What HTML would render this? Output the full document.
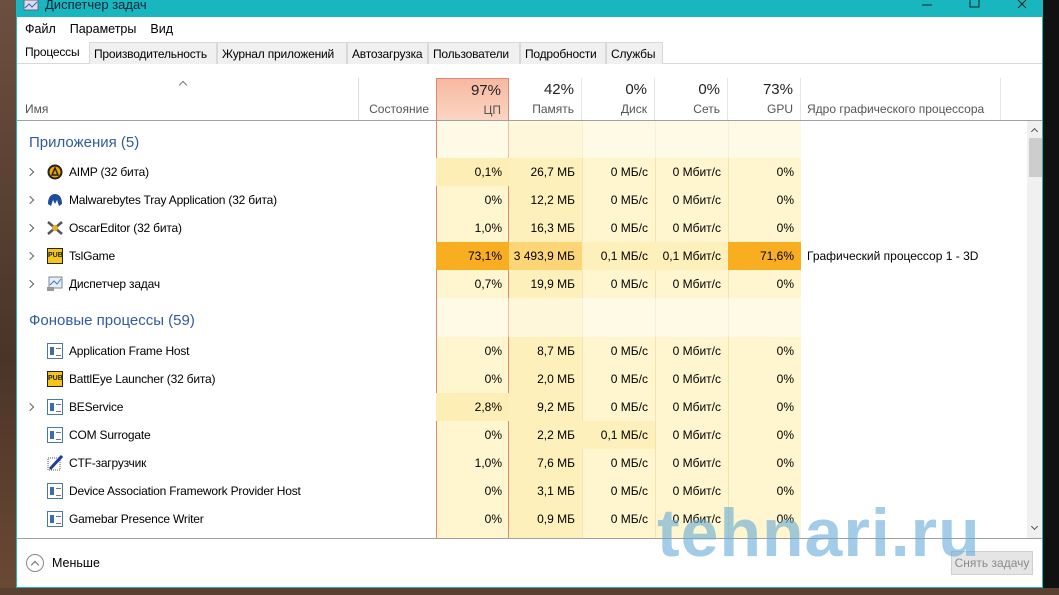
<!DOCTYPE html>
<html><head><meta charset="utf-8"><style>
*{margin:0;padding:0;box-sizing:border-box}
body{width:1059px;height:595px;overflow:hidden;background:#3a2a22;font-family:"Liberation Sans",sans-serif;font-size:12px;color:#000;position:relative}
.bg1{position:absolute;left:0;top:0;width:16px;height:595px;background:linear-gradient(#6b5040,#4a3428 60%,#6a4a35)}
.bg2{position:absolute;left:1043px;top:0;width:16px;height:595px;background:#111}
.bg3{position:absolute;left:0;top:588px;width:1059px;height:7px;background:#5a4030}
.win{position:absolute;left:16px;top:0;width:1027px;height:588px;background:#fff;border:1px solid #1ab8c0;border-top:none;overflow:hidden}
.title{position:absolute;left:0;top:0;width:100%;height:17px;background:#1ab6bf;color:#123;font-size:13px}
.title span{position:absolute;left:28px;top:-3px}
.menu{position:absolute;top:22px;left:8px;font-size:12.5px}
.menu span{margin-right:14px}
.tabs{position:absolute;top:42px;left:0;height:22px;border-bottom:1px solid #d9d9d9;width:100%}
.tab{position:absolute;top:0;height:22px;background:#f0f0f0;border:1px solid #d9d9d9;border-bottom:none;padding:4px 4px 0;font-size:12px;white-space:nowrap;letter-spacing:-0.2px}
.tab.a{background:#fff;border:none;top:-1px}
.hd{position:absolute;top:78px;height:42px;font-size:12px;color:#555}
.hd .p{position:absolute;right:7px;top:3px;font-size:15px;color:#222}
.hd .l{position:absolute;right:7px;top:24px}
.hline{position:absolute;left:0;top:120px;width:1027px;height:1px;background:#a0a0a0}
.row{position:absolute;left:0;height:28px;width:1010px}
.c{position:absolute;top:0;height:100%;text-align:right;padding-right:7px;line-height:28px;white-space:nowrap}
.n{position:absolute;left:52px;line-height:28px;white-space:nowrap;font-size:12px;letter-spacing:-0.2px}
.ar{position:absolute;left:10px;top:11px;width:6px;height:6px;border-right:1.3px solid #666;border-top:1.3px solid #666;transform:rotate(45deg)}
.ic{position:absolute;left:30px;top:6px;width:16px;height:16px}
.g{position:absolute;left:12px;font-size:15px;color:#2f5d9e;line-height:37px}
.svc{background:#fff;border:1px solid #4a78a8}
.svc:after{content:"";position:absolute;left:2px;top:3px;width:4px;height:8px;background:#3a6ea5}
.svc:before{content:"";position:absolute;left:8px;top:4px;width:5px;height:6px;border-top:1px solid #777;border-bottom:1px solid #777}
.pubg{background:#f5c518;border:1px solid #222;font-size:7px;font-weight:bold;line-height:14px;text-align:center;color:#222}
</style></head><body>
<div class="bg1"></div><div class="bg2"></div><div class="bg3"></div>
<div class="win">
<div class="title"><svg style="position:absolute;left:6px;top:0" width="16" height="12"><rect x="1" y="0" width="14" height="10" fill="#dde" stroke="#667"/><polyline points="2,8 6,4 9,7 14,2" fill="none" stroke="#36c"/></svg><span>Диспетчер задач</span>
<svg style="position:absolute;left:905px;top:0" width="110" height="12"><line x1="0" y1="5" x2="10" y2="5" stroke="#222"/><rect x="48" y="-2" width="9" height="9" fill="none" stroke="#222"/><path d="M96 0L104 8M104 0L96 8" stroke="#222"/></svg></div>
<div class="menu"><span>Файл</span><span>Параметры</span><span>Вид</span></div>
<div class="tabs">
<div class="tab a" style="left:4px">Процессы</div>
<div class="tab" style="left:72px;width:128px">Производительность</div>
<div class="tab" style="left:200px;width:130px">Журнал приложений</div>
<div class="tab" style="left:330px;width:81px">Автозагрузка</div>
<div class="tab" style="left:411px;width:92px">Пользователи</div>
<div class="tab" style="left:503px;width:86px">Подробности</div>
<div class="tab" style="left:589px;width:57px">Службы</div>
</div>
<div style="position:absolute;left:163px;top:82px;width:6px;height:6px;border-left:1px solid #777;border-top:1px solid #777;transform:rotate(45deg)"></div>
<div class="hd" style="left:0;width:342px;border-right:1px solid #ddd"><span style="position:absolute;left:8px;top:24px">Имя</span></div>
<div class="hd" style="left:342px;width:77px"><span class="l">Состояние</span></div>
<div class="hd" style="left:419px;width:73px;background:linear-gradient(#f7b8a0,#fbd6c4);border:1px solid #e08870;border-bottom:none"><span class="p">97%</span><span class="l">ЦП</span></div>
<div class="hd" style="left:492px;width:73px;border-right:1px solid #e6e6e6"><span class="p">42%</span><span class="l">Память</span></div>
<div class="hd" style="left:565px;width:73px;border-right:1px solid #e6e6e6"><span class="p">0%</span><span class="l">Диск</span></div>
<div class="hd" style="left:638px;width:73px;border-right:1px solid #e6e6e6"><span class="p">0%</span><span class="l">Сеть</span></div>
<div class="hd" style="left:711px;width:73px;border-right:1px solid #e6e6e6"><span class="p">73%</span><span class="l">GPU</span></div>
<div class="hd" style="left:784px;width:200px;border-right:1px solid #e6e6e6"><span style="position:absolute;left:6px;top:24px">Ядро графического процессора</span></div>
<div class="hline"></div>
<div style="position:absolute;left:419px;top:121px;width:73px;height:417px;background:#fff6cf;border-left:1px solid #e08870;border-right:1px solid #e08870"></div>
<div style="position:absolute;left:492px;top:121px;width:73px;height:417px;background:#fdf0bb"></div>
<div style="position:absolute;left:565px;top:121px;width:219px;height:417px;background:#fff6cf"></div>
<div style="position:absolute;left:565px;top:121px;width:1px;height:417px;background:#f0e4b0"></div>
<div style="position:absolute;left:638px;top:121px;width:1px;height:417px;background:#f0e4b0"></div>
<div style="position:absolute;left:711px;top:121px;width:1px;height:417px;background:#f0e4b0"></div>
<div style="position:absolute;left:420px;top:121px;width:364px;height:37px;background:rgba(255,255,255,.45)"></div>
<div style="position:absolute;left:420px;top:298px;width:364px;height:39px;background:rgba(255,255,255,.45)"></div>
<div class="g" style="top:124px">Приложения (5)</div>
<div class="g" style="top:302px">Фоновые процессы (59)</div>

<div class="row" style="top:158px"><div class="ar"></div><div class="ic"><svg width="16" height="16"><circle cx="8" cy="8" r="7.5" fill="#222"/><circle cx="8" cy="8" r="5.5" fill="#f0a500"/><path d="M8 4L11 11H5Z" fill="none" stroke="#222" stroke-width="1.5"/></svg></div><div class="n">AIMP (32 бита)</div>
<div class="c" style="left:419px;width:73px;background:#fdeeb5">0,1%</div><div class="c" style="left:492px;width:73px">26,7 МБ</div><div class="c" style="left:565px;width:73px">0 МБ/с</div><div class="c" style="left:638px;width:73px">0 Мбит/с</div><div class="c" style="left:711px;width:73px">0%</div></div>

<div class="row" style="top:186px"><div class="ar"></div><div class="ic"><svg width="16" height="16"><path d="M1 12C1 5 4 2 8 2S15 5 15 12L12 14 10 8 8 12 6 8 4 14Z" fill="#1c4e9c"/></svg></div><div class="n">Malwarebytes Tray Application (32 бита)</div>
<div class="c" style="left:419px;width:73px">0%</div><div class="c" style="left:492px;width:73px">12,2 МБ</div><div class="c" style="left:565px;width:73px">0 МБ/с</div><div class="c" style="left:638px;width:73px">0 Мбит/с</div><div class="c" style="left:711px;width:73px">0%</div></div>

<div class="row" style="top:214px"><div class="ar"></div><div class="ic"><svg width="16" height="16"><path d="M1 2L15 14M15 2L1 14" stroke="#555" stroke-width="2.5"/><circle cx="8" cy="8" r="3" fill="#e8b020"/></svg></div><div class="n">OscarEditor (32 бита)</div>
<div class="c" style="left:419px;width:73px">1,0%</div><div class="c" style="left:492px;width:73px">16,3 МБ</div><div class="c" style="left:565px;width:73px">0 МБ/с</div><div class="c" style="left:638px;width:73px">0 Мбит/с</div><div class="c" style="left:711px;width:73px">0%</div></div>

<div class="row" style="top:242px"><div class="ar"></div><div class="ic pubg">PUB</div><div class="n">TslGame</div>
<div class="c" style="left:419px;width:73px;background:#f9ae22">73,1%</div><div class="c" style="left:492px;width:73px;background:#fcd577">3 493,9 МБ</div><div class="c" style="left:565px;width:73px;background:#fdf0bb">0,1 МБ/с</div><div class="c" style="left:638px;width:73px;background:#fdf0bb">0,1 Мбит/с</div><div class="c" style="left:711px;width:73px;background:#f9ae22">71,6%</div><div class="c" style="left:784px;text-align:left;padding-left:6px">Графический процессор 1 - 3D</div></div>

<div class="row" style="top:270px"><div class="ar"></div><div class="ic"><svg width="16" height="16"><rect x="2" y="1" width="13" height="11" fill="#e8eef5" stroke="#789"/><polyline points="3,9 7,5 10,8 14,3" fill="none" stroke="#3a7ac0"/><rect x="0" y="11" width="7" height="4" fill="#999"/></svg></div><div class="n">Диспетчер задач</div>
<div class="c" style="left:419px;width:73px">0,7%</div><div class="c" style="left:492px;width:73px">19,9 МБ</div><div class="c" style="left:565px;width:73px">0 МБ/с</div><div class="c" style="left:638px;width:73px">0 Мбит/с</div><div class="c" style="left:711px;width:73px">0%</div></div>

<div class="row" style="top:337px"><div class="ic svc"></div><div class="n">Application Frame Host</div>
<div class="c" style="left:419px;width:73px">0%</div><div class="c" style="left:492px;width:73px">8,7 МБ</div><div class="c" style="left:565px;width:73px">0 МБ/с</div><div class="c" style="left:638px;width:73px">0 Мбит/с</div><div class="c" style="left:711px;width:73px">0%</div></div>

<div class="row" style="top:365px"><div class="ic pubg">PUB</div><div class="n">BattlEye Launcher (32 бита)</div>
<div class="c" style="left:419px;width:73px">0%</div><div class="c" style="left:492px;width:73px">2,0 МБ</div><div class="c" style="left:565px;width:73px">0 МБ/с</div><div class="c" style="left:638px;width:73px">0 Мбит/с</div><div class="c" style="left:711px;width:73px">0%</div></div>

<div class="row" style="top:393px"><div class="ar"></div><div class="ic svc"></div><div class="n">BEService</div>
<div class="c" style="left:419px;width:73px;background:#fdeeb5">2,8%</div><div class="c" style="left:492px;width:73px">9,2 МБ</div><div class="c" style="left:565px;width:73px">0 МБ/с</div><div class="c" style="left:638px;width:73px">0 Мбит/с</div><div class="c" style="left:711px;width:73px">0%</div></div>

<div class="row" style="top:421px"><div class="ic svc"></div><div class="n">COM Surrogate</div>
<div class="c" style="left:419px;width:73px">0%</div><div class="c" style="left:492px;width:73px">2,2 МБ</div><div class="c" style="left:565px;width:73px;background:#fdf0bb">0,1 МБ/с</div><div class="c" style="left:638px;width:73px">0 Мбит/с</div><div class="c" style="left:711px;width:73px">0%</div></div>

<div class="row" style="top:449px"><div class="ic"><svg width="16" height="16"><rect x="1" y="3" width="12" height="12" fill="#fff" stroke="#555" stroke-dasharray="1 1"/><path d="M3 14L15 1" stroke="#1a3e9a" stroke-width="3"/></svg></div><div class="n">CTF-загрузчик</div>
<div class="c" style="left:419px;width:73px">1,0%</div><div class="c" style="left:492px;width:73px">7,6 МБ</div><div class="c" style="left:565px;width:73px">0 МБ/с</div><div class="c" style="left:638px;width:73px">0 Мбит/с</div><div class="c" style="left:711px;width:73px">0%</div></div>

<div class="row" style="top:477px"><div class="ic svc"></div><div class="n">Device Association Framework Provider Host</div>
<div class="c" style="left:419px;width:73px">0%</div><div class="c" style="left:492px;width:73px">3,1 МБ</div><div class="c" style="left:565px;width:73px">0 МБ/с</div><div class="c" style="left:638px;width:73px">0 Мбит/с</div><div class="c" style="left:711px;width:73px">0%</div></div>

<div class="row" style="top:505px"><div class="ic svc"></div><div class="n">Gamebar Presence Writer</div>
<div class="c" style="left:419px;width:73px">0%</div><div class="c" style="left:492px;width:73px">0,9 МБ</div><div class="c" style="left:565px;width:73px">0 МБ/с</div><div class="c" style="left:638px;width:73px">0 Мбит/с</div><div class="c" style="left:711px;width:73px">0%</div></div>

<div style="position:absolute;left:1010px;top:121px;width:17px;height:417px;background:#f0f0f0"></div>
<div style="position:absolute;left:1012px;top:138px;width:13px;height:39px;background:#cdcdcd"></div>
<div style="position:absolute;left:1015px;top:129px;width:5px;height:5px;border-left:1.5px solid #555;border-top:1.5px solid #555;transform:rotate(45deg)"></div>
<div style="position:absolute;left:1015px;top:524px;width:5px;height:5px;border-right:1.5px solid #555;border-bottom:1.5px solid #555;transform:rotate(45deg)"></div>
<div style="position:absolute;left:0;top:538px;width:1027px;height:1px;background:#a0a0a0"></div>
<div style="position:absolute;left:9px;top:554px;width:18px;height:18px;border:1px solid #888;border-radius:50%"></div>
<div style="position:absolute;left:15px;top:562px;width:6px;height:6px;border-left:1px solid #666;border-top:1px solid #666;transform:rotate(45deg)"></div>
<div style="position:absolute;left:35px;top:556px;font-size:12.5px">Меньше</div>
<div style="position:absolute;left:934px;top:551px;width:82px;height:24px;background:#e5e5e5;border:1px solid #cfcfcf;color:#8a8a8a;text-align:center;line-height:22px">Снять задачу</div>
<div style="position:absolute;left:640px;top:494px;font-size:68px;font-weight:bold;color:rgba(100,170,215,.6);letter-spacing:1px">tehnari.ru</div>
</div>
</body></html>
